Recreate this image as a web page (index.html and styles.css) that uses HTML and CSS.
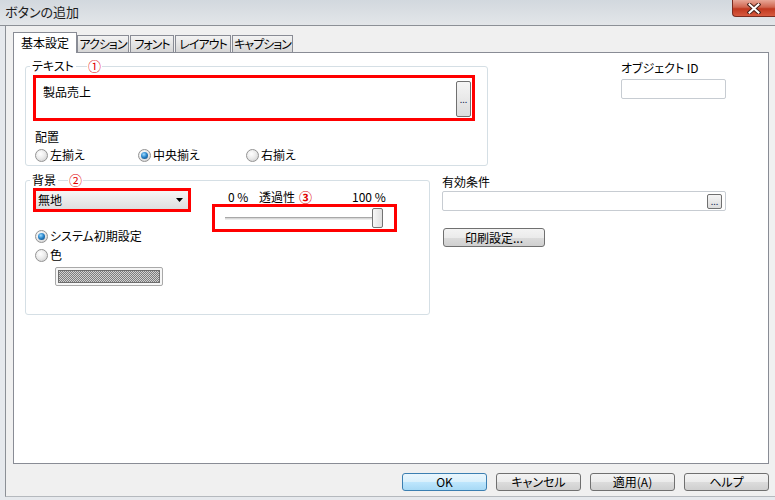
FILE: index.html
```html
<!DOCTYPE html>
<html lang="ja">
<head>
    <meta charset="UTF-8">
    <title>ボタンの追加</title>
    <link rel="stylesheet" href="styles.css">
</head>
<body>
    <div class="window">
        <div class="titlebar">
            <span class="title">ボタンの追加</span>
            <span class="close-btn">
                <svg width="14" height="11" viewBox="0 0 14 11">
                    <path d="M2.5 1.5 L11.5 9.5 M11.5 1.5 L2.5 9.5" stroke="#4b2119" stroke-width="4" stroke-linecap="square"/>
                    <path d="M2.5 1.5 L11.5 9.5 M11.5 1.5 L2.5 9.5" stroke="#fff" stroke-width="2" stroke-linecap="square"/>
                </svg>
            </span>
        </div>

        <div class="client">
            <div class="tabs">
                <div class="tab active">基本設定</div>
                <div class="tab tab-action">アクション</div>
                <div class="tab tab-font">フォント</div>
                <div class="tab tab-layout">レイアウト</div>
                <div class="tab tab-caption">キャプション</div>
            </div>

            <div class="panel">
                <div class="row">
                    <fieldset class="group group-text">
                        <legend>テキスト<span class="mark mark-1">①</span></legend>
                        <div class="hl text-box">
                            <span class="text-value">製品売上</span>
                            <span class="dots-btn dots-tall">...</span>
                        </div>
                        <div class="label label-align">配置</div>
                        <div class="radio-row">
                            <div class="radio"><span class="rb"></span>左揃え</div>
                            <div class="radio"><span class="rb on"></span>中央揃え</div>
                            <div class="radio"><span class="rb"></span>右揃え</div>
                        </div>
                    </fieldset>
                    <div class="side side-id">
                        <div class="label">オブジェクト ID</div>
                        <div class="input id-input"></div>
                    </div>
                </div>

                <div class="row">
                    <fieldset class="group group-bg">
                        <legend>背景<span class="mark mark-2">②</span></legend>
                        <div class="bg-cols">
                            <div class="bg-left">
                                <div class="hl select-box">
                                    <div class="select">
                                        <span>無地</span>
                                        <svg width="7" height="4" viewBox="0 0 7 4"><path d="M0 0 H7 L3.5 4 Z" fill="#000"/></svg>
                                    </div>
                                </div>
                                <div class="radio radio-sys"><span class="rb on"></span>システム初期設定</div>
                                <div class="radio radio-color"><span class="rb"></span>色</div>
                                <div class="swatch"><div class="swatch-fill"></div></div>
                            </div>
                            <div class="bg-right">
                                <div class="scale">
                                    <span class="scale-min">0 %</span>
                                    <span class="scale-title">透過性<span class="mark-inline">③</span></span>
                                    <span class="scale-max">100 %</span>
                                </div>
                                <div class="hl slider-box">
                                    <div class="track"></div>
                                    <div class="thumb"></div>
                                </div>
                            </div>
                        </div>
                    </fieldset>
                    <div class="side side-cond">
                        <div class="label">有効条件</div>
                        <div class="input cond-input">
                            <span class="dots-btn dots-small">...</span>
                        </div>
                        <button class="btn print-btn">印刷設定...</button>
                    </div>
                </div>
            </div>

            <div class="footer">
                <button class="btn foot-btn default">OK</button>
                <button class="btn foot-btn">キャンセル</button>
                <button class="btn foot-btn">適用(A)</button>
                <button class="btn foot-btn">ヘルプ</button>
            </div>
        </div>
    </div>
</body>
</html>
```

FILE: styles.css
```css
* {
    box-sizing: border-box;
}
body {
    margin: 0;
    font-family: "Noto Sans CJK JP", "Noto Sans", sans-serif;
    font-size: 12px;
    color: #000;
    font-feature-settings: "palt";
    background: #e6e9ed;
}
.window {
    width: 775px;
    height: 500px;
    display: flex;
    flex-direction: column;
    overflow: hidden;
    background: #e6e9ed;
}

/* title bar */
.titlebar {
    height: 26px;
    flex-shrink: 0;
    display: flex;
    justify-content: space-between;
    align-items: flex-start;
    background: linear-gradient(#d2d8de, #e3e6e9);
    border-bottom: 1px solid #8c9096;
}
.title {
    padding: 3px 0 0 5px;
    font-size: 13px;
    line-height: 18px;
    color: #1c1c1c;
}
.close-btn {
    width: 43px;
    height: 17px;
    display: flex;
    justify-content: center;
    align-items: center;
    background: linear-gradient(#e8a797, #d0654f 45%, #c0381f 55%, #d75a3f);
    border: 1px solid #7b2c20;
    border-top: none;
    border-right: none;
    border-radius: 0 0 0 4px;
}

/* client area */
.client {
    flex: 1;
    margin: 0 0 3px 5px;
    border-left: 1px solid #8c9096;
    border-bottom: 1px solid #b5b9be;
    background: #f0f0f0;
    display: flex;
    flex-direction: column;
}
.tabs {
    height: 26px;
    display: flex;
    align-items: flex-end;
    padding: 6px 0 0 7px;
}
.tab {
    height: 17px;
    line-height: 16px;
    padding: 0;
    margin-right: 1px;
    text-align: center;
    letter-spacing: -1px;
    white-space: nowrap;
    background: linear-gradient(#f3f3f3, #d6d6d6);
    border: 1px solid #898c95;
    border-bottom: none;
}
.tab.active {
    width: 64px;
    height: 21px;
    margin-bottom: -1px;
    margin-right: 0;
    padding-top: 2px;
    letter-spacing: 0;
    background: #fff;
    position: relative;
    z-index: 1;
}
.tab-action {
    width: 52px;
}
.tab-font {
    width: 44px;
}
.tab-layout {
    width: 56px;
}
.tab-caption {
    width: 61px;
}
.panel {
    margin-left: 7px;
    width: 756px;
    height: 412px;
    background: #fff;
    border: 1px solid #898c95;
    padding: 6px 0 0 11px;
}
.row {
    display: flex;
    align-items: flex-start;
}

/* group boxes */
.group {
    margin: 0;
    padding: 0 12px 3px 7px;
    border: 1px solid #d5dfe5;
    border-radius: 3px;
    min-width: 0;
}
.group legend {
    position: relative;
    padding: 0 2px;
    margin-left: -3px;
    line-height: 14px;
}
.mark {
    position: absolute;
    top: 0;
    padding: 0 1px;
    background: #fff;
    color: #e00000;
    font-size: 13px;
    line-height: 14px;
}
.mark-1 {
    left: 57px;
}
.mark-2 {
    left: 38px;
}
.mark-inline {
    margin-left: 4px;
    color: #e00000;
    font-size: 13px;
    font-weight: bold;
}
.hl {
    border: 3px solid #ff0000;
}
.group-text {
    width: 463px;
}
.text-box {
    height: 46px;
    margin-top: 2px;
    display: flex;
    justify-content: space-between;
    align-items: flex-start;
    background: #fff;
}
.text-value {
    padding: 7px 0 0 7px;
    line-height: 14px;
}
.dots-btn {
    display: flex;
    justify-content: center;
    align-items: center;
    font-size: 9px;
    line-height: 9px;
    color: #1a2a55;
    background: linear-gradient(#f5f5f5, #dcdcdc);
    border: 1px solid #707070;
    border-radius: 2px;
}
.dots-tall {
    width: 15px;
    height: 36px;
    margin: 3px 1px 0 0;
}
.dots-small {
    width: 15px;
    height: 15px;
}
.label {
    line-height: 14px;
}
.label-align {
    margin-top: 9px;
    padding-left: 2px;
}
.radio-row {
    margin-top: 4px;
    padding-left: 2px;
    display: grid;
    grid-template-columns: 103px 108px auto;
}
.radio {
    display: flex;
    align-items: center;
    gap: 2px;
    height: 14px;
    line-height: 14px;
}
.rb {
    width: 13px;
    height: 13px;
    flex-shrink: 0;
    border-radius: 50%;
    border: 1px solid #939393;
    background: radial-gradient(circle at 40% 35%, #ffffff 0, #ececec 45%, #c9c9c9 100%);
    display: flex;
    justify-content: center;
    align-items: center;
}
.rb.on::after {
    content: "";
    width: 7px;
    height: 7px;
    border-radius: 50%;
    background: radial-gradient(circle at 40% 35%, #9fdcff 0, #2a86cc 45%, #0c3b6b 100%);
}

/* side columns */
.side-id {
    margin: 2px 0 0 133px;
}
.input {
    height: 20px;
    border: 1px solid #c7ccd2;
    border-radius: 2px;
    background: #fff;
}
.id-input {
    width: 105px;
    margin-top: 4px;
}

/* background group */
.group-bg {
    width: 405px;
    margin-top: 7px;
    padding-bottom: 28px;
}
.bg-cols {
    display: flex;
}
.bg-left {
    width: 158px;
}
.select-box {
    height: 24px;
    margin-top: 1px;
}
.select {
    height: 18px;
    display: flex;
    justify-content: space-between;
    align-items: center;
    padding: 0 5px 0 2px;
    background: linear-gradient(#f6f6f6, #dedede);
    line-height: 14px;
}
.radio-sys {
    margin: 17px 0 0 2px;
}
.radio-color {
    margin: 5px 0 0 2px;
}
.swatch {
    width: 108px;
    height: 19px;
    margin: 5px 0 0 22px;
    padding: 2px;
    border: 1px solid #a9a9a9;
    border-radius: 2px;
    background: #f6f6f6;
}
.swatch-fill {
    height: 100%;
    border: 1px solid #6e6e6e;
    background: repeating-conic-gradient(#7d7d7d 0 25%, #d2d2d2 0 50%) 0 0 / 2px 2px;
}
.bg-right {
    margin: 3px 0 0 21px;
    width: 185px;
}
.scale {
    display: flex;
    line-height: 14px;
    padding-left: 16px;
}
.scale-min {
    width: 31px;
}
.scale-title {
    width: 93px;
}
.slider-box {
    height: 28px;
    display: flex;
    align-items: center;
    padding: 0 11px 0 10px;
}
.track {
    flex: 1;
    height: 3px;
    border-top: 1px solid #a8a8a8;
    border-bottom: 1px solid #ececec;
    background: #d8d8d8;
}
.thumb {
    width: 11px;
    height: 20px;
    margin-left: -2px;
    border: 1px solid #737373;
    border-radius: 2px;
    background: linear-gradient(to right, #f7f7f7, #e0e0e0);
}

/* condition column */
.side-cond {
    width: 284px;
    margin: 9px 0 0 12px;
}
.cond-input {
    margin-top: 2px;
    display: flex;
    justify-content: flex-end;
    align-items: center;
    padding-right: 3px;
}
.btn {
    font-family: inherit;
    font-size: 12px;
    font-feature-settings: "palt";
    color: #000;
    padding: 0;
    line-height: 14px;
    background: linear-gradient(#f3f3f3 0, #ebebeb 50%, #dcdcdc 51%, #cfcfcf);
    border: 1px solid #707070;
    border-radius: 3px;
}
.print-btn {
    width: 102px;
    height: 19px;
    margin: 17px 0 0 1px;
}

/* footer */
.footer {
    display: flex;
    justify-content: flex-end;
    gap: 9px;
    padding: 9px 6px 0 0;
}
.foot-btn {
    width: 85px;
    height: 18px;
}
.foot-btn.default {
    border-color: #3c7fb1;
    background: linear-gradient(#eaf6fd, #d9f0fc 50%, #bee6fd 51%, #a7d9f5);
}
```
